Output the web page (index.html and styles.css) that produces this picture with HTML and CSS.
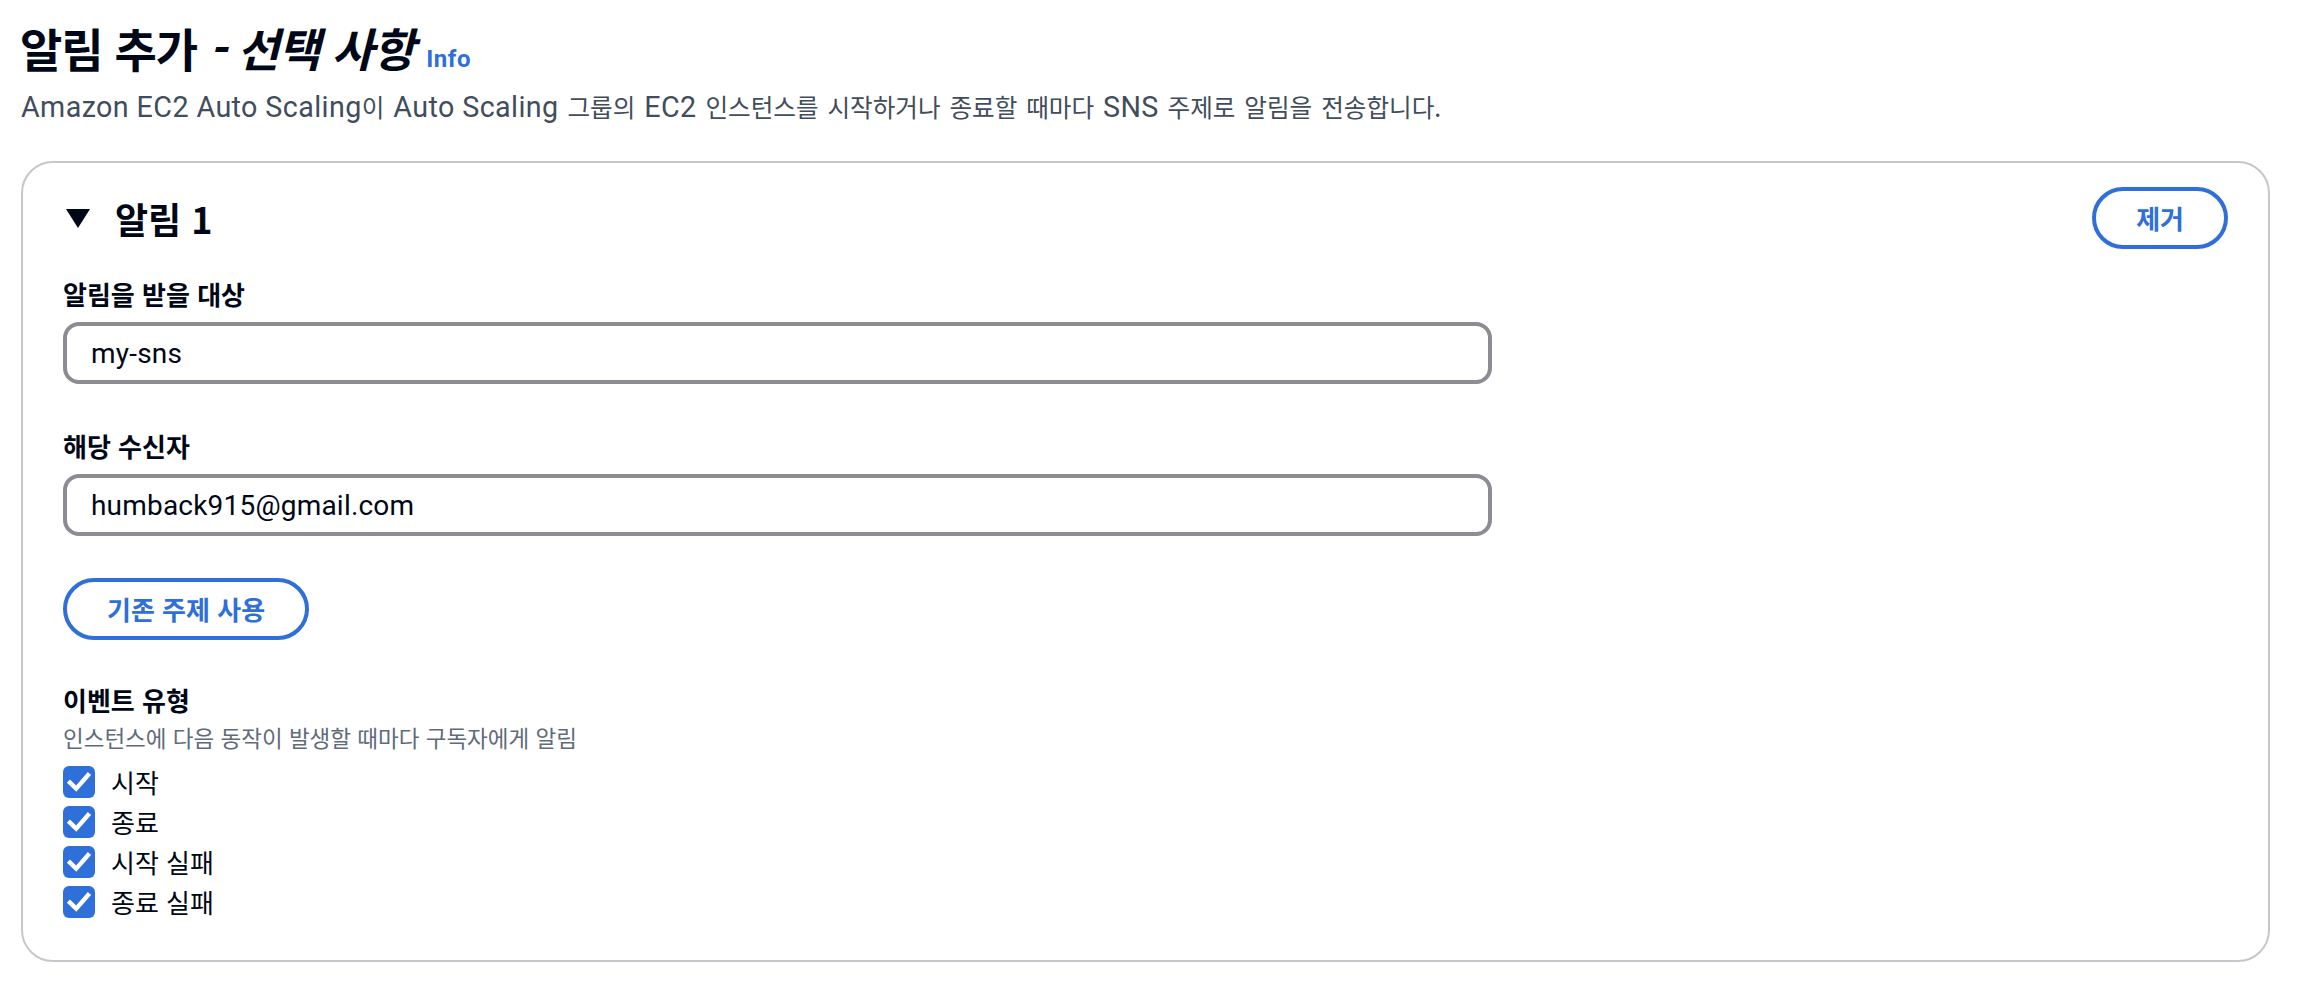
FILE: index.html
```html
<!DOCTYPE html>
<html lang="ko">
<head>
<meta charset="utf-8">
<title>알림 추가</title>
<link rel="stylesheet" href="styles.css">
</head>
<body>
<main class="page">
  <header class="page-header">
    <h1 class="title">알림 추가 <i class="optional">- 선택 사항</i><a class="info" href="#">Info</a></h1>
    <p class="lead"><span class="lat">Amazon EC2 Auto Scaling</span>이 <span class="lat">Auto Scaling</span> 그룹의 <span class="lat">EC2</span> 인스턴스를 시작하거나 종료할 때마다 <span class="lat">SNS</span> 주제로 알림을 전송합니다.</p>
  </header>

  <section class="card">
    <div class="card-head">
      <h2 class="card-title">
        <svg class="caret" viewBox="0 0 30 30" aria-hidden="true"><polygon points="3,6 27,6 15,25"/></svg>
        <span>알림 1</span>
      </h2>
      <button class="btn" type="button">제거</button>
    </div>

    <div class="field field-first">
      <label class="label" for="target">알림을 받을 대상</label>
      <input class="input" id="target" type="text" value="my-sns">
    </div>

    <div class="field field-next">
      <label class="label" for="recipients">해당 수신자</label>
      <input class="input" id="recipients" type="text" value="humback915@gmail.com">
    </div>

    <div class="actions">
      <button class="btn" type="button">기존 주제 사용</button>
    </div>

    <div class="events">
      <div class="label">이벤트 유형</div>
      <div class="events-desc">인스턴스에 다음 동작이 발생할 때마다 구독자에게 알림</div>
      <div class="checks">
        <label class="check"><span class="box"><svg viewBox="0 0 16 16" aria-hidden="true"><polyline points="3.5,8.3 6.6,11.3 12.5,4.6"/></svg></span>시작</label>
        <label class="check"><span class="box"><svg viewBox="0 0 16 16" aria-hidden="true"><polyline points="3.5,8.3 6.6,11.3 12.5,4.6"/></svg></span>종료</label>
        <label class="check"><span class="box"><svg viewBox="0 0 16 16" aria-hidden="true"><polyline points="3.5,8.3 6.6,11.3 12.5,4.6"/></svg></span>시작 실패</label>
        <label class="check"><span class="box"><svg viewBox="0 0 16 16" aria-hidden="true"><polyline points="3.5,8.3 6.6,11.3 12.5,4.6"/></svg></span>종료 실패</label>
      </div>
    </div>
  </section>
</main>
</body>
</html>
```

FILE: styles.css
```css
* {
  box-sizing: border-box;
}

html,
body {
  margin: 0;
  background: #ffffff;
}

body {
  font-family: "Noto Sans CJK KR", sans-serif;
  color: #000716;
}

.page {
  padding: 17px 28px 0 21px;
}

.title {
  margin: 0 0 0 -1px;
  font-size: 46px;
  line-height: 60px;
  font-weight: 700;
  letter-spacing: -1px;
  color: #000716;
}

.optional {
  font-style: italic;
}

.info {
  margin-left: 12px;
  font-family: Roboto, sans-serif;
  font-size: 24px;
  line-height: 1;
  font-weight: 700;
  font-style: normal;
  letter-spacing: 0.6px;
  color: #2e6fd9;
  text-decoration: none;
}

.lead {
  margin: 9px 0 0;
  font-size: 24.6px;
  line-height: 40px;
  color: #414d5c;
  word-spacing: 2px;
}

.lat {
  font-family: Roboto, sans-serif;
  font-size: 28.7px;
  line-height: 1;
  letter-spacing: 0.4px;
  word-spacing: 0;
}

.card {
  margin-top: 35px;
  border: 2px solid #c6c6cd;
  border-radius: 32px;
  padding: 24px 40px 38px;
  display: flex;
  flex-direction: column;
}

.card-head {
  display: flex;
  align-items: center;
  justify-content: space-between;
}

.card-title {
  margin: 0;
  display: flex;
  align-items: center;
  gap: 22px;
  font-size: 36px;
  line-height: 40px;
  font-weight: 700;
}

.caret {
  width: 30px;
  height: 30px;
  fill: #000716;
  flex: none;
}

.btn {
  height: 62px;
  padding: 0 40px;
  border: 4px solid #2e6fd9;
  border-radius: 31px;
  background: #ffffff;
  color: #2e6fd9;
  font-family: "Noto Sans CJK KR", sans-serif;
  font-size: 26px;
  font-weight: 700;
  line-height: 1;
  cursor: pointer;
}

.field {
  display: flex;
  flex-direction: column;
  gap: 8px;
}

.field-first {
  margin-top: 25px;
}

.field-next {
  margin-top: 42px;
}

.label {
  font-size: 26px;
  line-height: 40px;
  font-weight: 700;
  color: #000716;
}

.input {
  width: 66%;
  height: 62px;
  margin: 0;
  padding: 0 24px;
  border: 4px solid #8c8c94;
  border-radius: 16px;
  background: #ffffff;
  font-family: Roboto, sans-serif;
  font-size: 28px;
  letter-spacing: 0.2px;
  color: #000716;
  outline: none;
}

.actions {
  margin-top: 42px;
  display: flex;
}

.events {
  margin-top: 40px;
  display: flex;
  flex-direction: column;
}

.events-desc {
  font-size: 22.5px;
  line-height: 34px;
  color: #5f6b7a;
}

.checks {
  margin-top: 8px;
  display: flex;
  flex-direction: column;
}

.check {
  height: 40px;
  display: flex;
  align-items: center;
  gap: 16px;
  font-size: 26px;
  line-height: 40px;
  color: #000716;
}

.box {
  width: 32px;
  height: 32px;
  border-radius: 6px;
  background: #2e6fd9;
  display: flex;
  align-items: center;
  justify-content: center;
  flex: none;
}

.box svg {
  width: 32px;
  height: 32px;
  fill: none;
  stroke: #ffffff;
  stroke-width: 2.2;
  stroke-linecap: square;
  stroke-linejoin: miter;
}
```
